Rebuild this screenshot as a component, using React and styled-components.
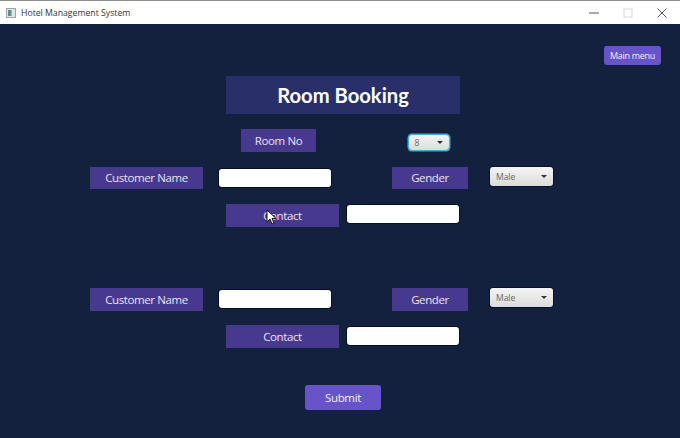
import React from 'react';
import styled, { createGlobalStyle } from 'styled-components';

const GlobalStyle = createGlobalStyle`
  html, body {
    margin: 0;
    padding: 0;
    background: #13213f;
  }
  body {
    font-family: 'Open Sans', 'Noto Sans', sans-serif;
  }
`;

const Window = styled.div`
  width: 680px;
  height: 438px;
  overflow: hidden;
  display: flex;
  flex-direction: column;
  background: #13213f;
`;

const TitleBar = styled.div`
  height: 23px;
  flex: none;
  display: flex;
  align-items: center;
  background: #fff;
  border-top: 1px solid #8c8c8c;
  padding-left: 6px;
`;

const AppName = styled.span`
  margin-left: 5px;
  font-size: 8.7px;
  color: #333;
`;

const WindowButtons = styled.div`
  margin-left: auto;
  display: flex;
  align-items: center;
  gap: 24px;
  padding-right: 13px;
`;

const TopBar = styled.div`
  display: flex;
  justify-content: flex-end;
  padding: 22px 19px 0 0;
`;

const Row = styled.div`
  display: flex;
  align-items: flex-start;
  padding-left: ${(p) => p.$left}px;
  margin-top: ${(p) => p.$top}px;
`;

const Banner = styled.h1`
  margin: 0;
  width: 234px;
  height: 38px;
  display: flex;
  align-items: center;
  justify-content: center;
  background: #293069;
  color: #fff;
  font-family: 'Lato', sans-serif;
  font-size: 20.2px;
  font-weight: 700;
`;

const Label = styled.div`
  position: relative;
  width: ${(p) => p.$w}px;
  height: 22.5px;
  margin-left: ${(p) => p.$ml || 0}px;
  display: flex;
  align-items: center;
  justify-content: center;
  background: #473a8e;
  color: #e6e3f5;
  font-size: 11.5px;
  letter-spacing: -0.4px;
`;

const Input = styled.input`
  width: 112px;
  height: 18px;
  box-sizing: border-box;
  margin: ${(p) => p.$mt}px 0 0 ${(p) => p.$ml}px;
  padding: 0 6px;
  background: #fff;
  border: none;
  border-radius: 3px;
  box-shadow: 0 0 0 1px #070c2a;
`;

const Select = styled.div`
  width: ${(p) => p.$w}px;
  height: ${(p) => p.$h}px;
  box-sizing: border-box;
  margin: ${(p) => p.$mt || 0}px 0 0 ${(p) => p.$ml}px;
  display: flex;
  align-items: center;
  justify-content: space-between;
  padding: 0 6px;
  border-radius: 3px;
  background: linear-gradient(#f4f4f4, #dcdcdc);
  color: #666;
  font-size: 8.5px;
  box-shadow: ${(p) => (p.$focus ? '0 0 0 1.5px #3fb0dc' : '0 0 0 1px #0a0f2c')};
`;

const Caret = styled.span`
  width: 0;
  height: 0;
  border-left: 3.5px solid transparent;
  border-right: 3.5px solid transparent;
  border-top: 3.5px solid #333;
`;

const Button = styled.button`
  border: none;
  border-radius: 3px;
  background: #6654c8;
  color: #f0eefb;
  font-family: inherit;
  padding: 0;
  width: ${(p) => p.$w}px;
  height: ${(p) => p.$h}px;
  font-size: ${(p) => p.$size}px;
  letter-spacing: -0.3px;
`;

const Pointer = styled.svg`
  position: absolute;
  left: 40px;
  top: 5px;
`;

const CustomerRow = ({ top, inputTop }) => (
  <Row $left={90} $top={top}>
    <Label $w={113}>Customer Name</Label>
    <Input $ml={15.5} $mt={inputTop} />
    <Label $w={76} $ml={61.5}>Gender</Label>
    <Select $w={63} $h={19} $ml={22}>
      Male
      <Caret />
    </Select>
  </Row>
);

const App = () => {
  return (
    <>
      <GlobalStyle />
      <Window>
        <TitleBar>
          <svg width="10" height="10" viewBox="0 0 10 10">
            <rect x="0.5" y="0.5" width="9" height="9" fill="#dfe6e6" stroke="#9aa6a6" />
            <rect x="2" y="2" width="3.5" height="6" fill="#5f8f8c" />
          </svg>
          <AppName>Hotel Management System</AppName>
          <WindowButtons>
            <svg width="10" height="10" viewBox="0 0 10 10">
              <path d="M0 5h10" stroke="#555" strokeWidth="1" />
            </svg>
            <svg width="10" height="10" viewBox="0 0 10 10">
              <rect x="1" y="1" width="8" height="8" fill="none" stroke="#d8d8d8" />
            </svg>
            <svg width="10" height="10" viewBox="0 0 10 10">
              <path d="M0.5 0.5l9 9M9.5 0.5l-9 9" stroke="#555" strokeWidth="1" />
            </svg>
          </WindowButtons>
        </TitleBar>
        <TopBar>
          <Button $w={57} $h={19} $size={9}>Main menu</Button>
        </TopBar>
        <Row $left={226} $top={11}>
          <Banner>Room Booking</Banner>
        </Row>
        <Row $left={241} $top={15}>
          <Label $w={75}>Room No</Label>
          <Select $w={40.5} $h={15} $ml={92.5} $mt={5.8} $focus>
            8
            <Caret />
          </Select>
        </Row>
        <CustomerRow top={15} inputTop={2} />
        <Row $left={226} $top={15}>
          <Label $w={113}>
            Contact
            <Pointer width="12" height="16" viewBox="0 0 12 16">
              <path d="M1 1v12l3-3 2 5 2-1-2-4.5h4z" fill="#fff" stroke="#111" strokeWidth="1" />
            </Pointer>
          </Label>
          <Input $ml={8} $mt={1.3} />
        </Row>
        <CustomerRow top={61.5} inputTop={2} />
        <Row $left={226} $top={14.5}>
          <Label $w={113}>Contact</Label>
          <Input $ml={8} $mt={2} />
        </Row>
        <Row $left={305} $top={37.5}>
          <Button $w={76} $h={24.5} $size={11.5}>Submit</Button>
        </Row>
      </Window>
    </>
  );
};

export default App;
